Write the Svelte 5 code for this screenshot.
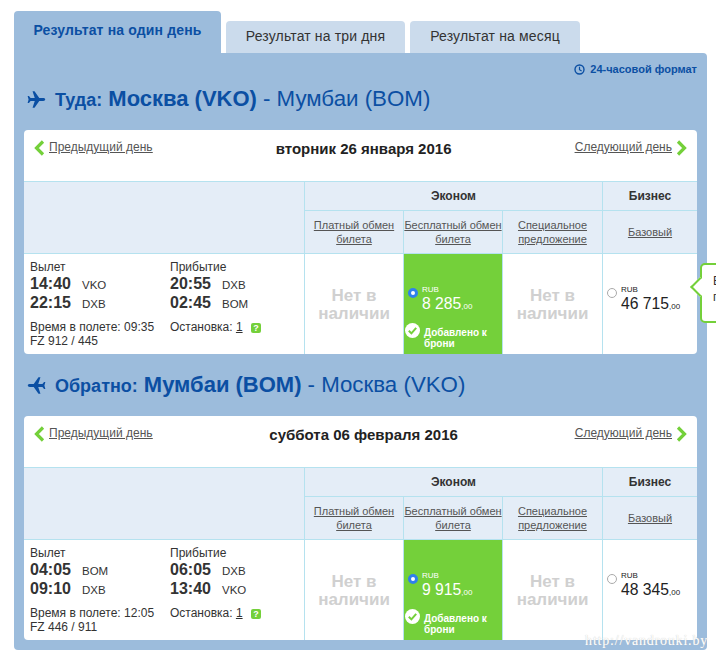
<script>
	const legs = [
		{
			label: 'Туда:',
			from: 'Москва (VKO)',
			to: 'Мумбаи (BOM)',
			back: false,
			date: 'вторник 26 января 2016',
			times: [['14:40', 'VKO', '20:55', 'DXB'], ['22:15', 'DXB', '02:45', 'BOM']],
			duration: '09:35',
			flight: 'FZ 912 / 445',
			eco: '8 285',
			biz: '46 715'
		},
		{
			label: 'Обратно:',
			from: 'Мумбаи (BOM)',
			to: 'Москва (VKO)',
			back: true,
			date: 'суббота 06 февраля 2016',
			times: [['04:05', 'BOM', '06:05', 'DXB'], ['09:10', 'DXB', '13:40', 'VKO']],
			duration: '12:05',
			flight: 'FZ 446 / 911',
			eco: '9 915',
			biz: '48 345'
		}
	];
</script>

<div class="page">
	<nav class="tabs">
		<div class="tab active">Результат на один день</div>
		<div class="tab">Результат на три дня</div>
		<div class="tab">Результат на месяц</div>
	</nav>

	<main class="panel">
		<div class="format">
			<svg width="11" height="11" viewBox="0 0 11 11">
				<circle cx="5.5" cy="5.5" r="4.5" fill="none" stroke="#0b4fa3" stroke-width="1.4" />
				<path d="M5.5 2.8V5.7L7.6 7" fill="none" stroke="#0b4fa3" stroke-width="1.2" />
			</svg>
			<span>24-часовой формат</span>
		</div>

		{#each legs as leg, i}
			<h2 class="route" class:second={i === 1}>
				<svg class="plane" class:back={leg.back} width="19" height="19" viewBox="0 0 24 24">
					<path
						fill="#0b4fa3"
						d="M23 12c0-1-1-1.800-2.500-1.800H15.500L9.500 1.500H7L9.800 10.200H4.500L2.500 7.500H.8L2 12 .8 16.500H2.500L4.500 13.800H9.800L7 22.500H9.500L15.500 13.800H20.500C22 13.800 23 13 23 12Z"
					/>
				</svg>
				<span class="label">{leg.label}</span>
				<strong>{leg.from}</strong>
				<span class="rest">- {leg.to}</span>
			</h2>

			<section class="card">
				<div class="days">
					<a class="day prev" href="#prev">
						<svg width="11" height="16" viewBox="0 0 11 16"><path d="M9 1.500 2.500 8 9 14.500" fill="none" stroke="#74d03a" stroke-width="3.200" /></svg>
						<u>Предыдущий день</u>
					</a>
					<div class="date">{leg.date}</div>
					<a class="day next" href="#next">
						<u>Следующий день</u>
						<svg width="11" height="16" viewBox="0 0 11 16"><path d="M2 1.500 8.500 8 2 14.500" fill="none" stroke="#74d03a" stroke-width="3.200" /></svg>
					</a>
				</div>

				<div class="fares">
					<div class="blank"></div>
					<div class="head cabin eco-head">Эконом</div>
					<div class="head cabin biz-head">Бизнес</div>
					<div class="head sub"><u>Платный обмен билета</u></div>
					<div class="head sub"><u>Бесплатный обмен билета</u></div>
					<div class="head sub"><u>Специальное предложение</u></div>
					<div class="head sub last"><u>Базовый</u></div>

					<div class="info">
						<div class="col">
							<div>Вылет</div>
							<div class="times">
								{#each leg.times as t}
									<div class="time"><b>{t[0]}</b><span>{t[1]}</span></div>
								{/each}
							</div>
							<div class="meta">Время в полете: {leg.duration}</div>
							<div>{leg.flight}</div>
						</div>
						<div class="col">
							<div>Прибытие</div>
							<div class="times">
								{#each leg.times as t}
									<div class="time"><b>{t[2]}</b><span>{t[3]}</span></div>
								{/each}
							</div>
							<div class="meta">Остановка: <u>1</u> <i class="help">?</i></div>
						</div>
					</div>

					<div class="none">Нет в наличии</div>
					<div class="selected">
						<div class="price">
							<span class="radio on"></span>
							<div>
								<div class="cur">RUB</div>
								<div class="amount">{leg.eco}<small>,00</small></div>
							</div>
						</div>
						<div class="added">
							<svg width="15" height="15" viewBox="0 0 15 15">
								<circle cx="7.500" cy="7.500" r="7.500" fill="#fff" />
								<path d="M3.800 7.800 6.400 10.400 11.200 4.800" fill="none" stroke="#74d03a" stroke-width="2" />
							</svg>
							<span>Добавлено к брони</span>
						</div>
					</div>
					<div class="none">Нет в наличии</div>
					<div class="biz">
						<div class="price">
							<span class="radio"></span>
							<div>
								<div class="cur">RUB</div>
								<div class="amount">{leg.biz}<small>,00</small></div>
							</div>
						</div>
					</div>
				</div>
			</section>
		{/each}
	</main>

	<div class="tooltip">В<br />п</div>
	<div class="mark">http://vandrouki.by</div>
</div>

<style>
	:global(body) {
		margin: 0;
		background: #fff;
	}

	.page {
		position: relative;
		width: 716px;
		height: 656px;
		overflow: hidden;
		box-sizing: border-box;
		padding: 11px 9px 0 14px;
		font-family: 'Liberation Sans', Arial, sans-serif;
		font-size: 12px;
		color: #333;
	}

	u {
		text-decoration: underline;
	}

	.tabs {
		display: flex;
		gap: 5px;
		align-items: flex-end;
		height: 42px;
	}

	.tab {
		width: 179px;
		height: 32px;
		box-sizing: border-box;
		padding-top: 7px;
		background: #cbdbec;
		border-radius: 4px 4px 0 0;
		text-align: center;
		font-size: 14px;
		letter-spacing: 0.15px;
		color: #333;
	}

	.tab.active {
		width: 207px;
		height: 42px;
		padding-top: 11px;
		background: #9cbcdc;
		color: #0b4fa3;
		font-weight: bold;
	}

	.tab:last-child {
		width: 170px;
	}

	.panel {
		height: 597px;
		box-sizing: border-box;
		padding: 9px 10px 0;
		background: #9cbcdc;
		border-radius: 0 4px 4px 4px;
	}

	.format {
		display: flex;
		justify-content: flex-end;
		align-items: center;
		gap: 5px;
		height: 14px;
		color: #0b4fa3;
		font-size: 11px;
		font-weight: bold;
	}

	.route {
		display: flex;
		align-items: baseline;
		height: 30px;
		margin: 8px 0 0;
		padding-left: 3px;
		font-size: 22px;
		font-weight: normal;
		line-height: 30px;
		color: #0b4fa3;
	}

	.route.second {
		margin-top: 16px;
	}

	.plane {
		align-self: center;
		margin-right: 9px;
		flex: none;
	}

	.plane.back {
		transform: scaleX(-1);
	}

	.label {
		font-size: 18px;
		font-weight: bold;
		margin-right: 6px;
	}

	.route strong {
		margin-right: 6px;
	}

	.rest {
		font-size: 22.3px;
	}

	.card {
		margin-top: 16px;
		height: 224px;
		background: #fff;
		border-radius: 4px;
		overflow: hidden;
	}

	.days {
		display: flex;
		justify-content: space-between;
		height: 52px;
		box-sizing: border-box;
		padding: 8px 10px 0;
		position: relative;
	}

	.day {
		display: flex;
		align-items: flex-start;
		gap: 4px;
		height: 18px;
		color: #555;
		font-size: 12px;
		line-height: 18px;
	}

	.day svg {
		margin-top: 2px;
	}

	.date {
		flex: 1;
		padding-top: 2px;
		text-align: center;
		font-size: 15px;
		font-weight: bold;
		color: #222;
	}

	.fares {
		display: grid;
		grid-template-columns: 281px 99px 99px 100px 94px;
		grid-template-rows: 29px 43px 100px;
		border-top: 1px solid #b5e2ef;
		margin-top: -1px;
	}

	.blank {
		grid-row: 1 / 3;
		background: #e4edf7;
		border-right: 1px solid #b5e2ef;
		border-bottom: 1px solid #b5e2ef;
	}

	.head {
		background: #e4edf7;
		border-bottom: 1px solid #b5e2ef;
		border-right: 1px solid #b5e2ef;
		box-sizing: border-box;
		display: flex;
		align-items: center;
		justify-content: center;
		text-align: center;
	}

	.cabin {
		font-weight: bold;
		color: #333;
	}

	.eco-head {
		grid-column: 2 / 5;
	}

	.biz-head,
	.last {
		border-right: 0;
	}

	.sub {
		font-size: 11px;
		line-height: 14px;
		color: #555;
	}

	.info {
		display: flex;
		box-sizing: border-box;
		padding: 6px 0 0 6px;
		border-right: 1px solid #b5e2ef;
		line-height: 14px;
	}

	.col {
		flex: none;
		width: 140px;
		color: #333;
	}

	.times {
		margin-top: 1px;
	}

	.time {
		display: flex;
		align-items: baseline;
		height: 19px;
		line-height: 18px;
	}

	.time b {
		width: 52px;
		font-size: 16px;
		color: #333;
	}

	.time span {
		font-size: 11.500px;
	}

	.meta {
		margin-top: 7px;
	}

	.help {
		display: inline-block;
		width: 10px;
		height: 10px;
		margin-left: 5px;
		border-radius: 2px;
		background: #74d03a;
		color: #fff;
		font-size: 9px;
		font-style: normal;
		font-weight: bold;
		line-height: 10px;
		text-align: center;
	}

	.none {
		display: flex;
		align-items: center;
		justify-content: center;
		padding: 1px 10px 0;
		border-right: 1px solid #b5e2ef;
		font-size: 17px;
		font-weight: bold;
		line-height: 18px;
		text-align: center;
		color: #d0d0d0;
	}

	.selected {
		background: #74d03a;
		border-right: 1px solid #b5e2ef;
		color: #fff;
		padding: 31px 0 0 4px;
	}

	.biz {
		padding: 31px 0 0 4px;
		color: #222;
	}

	.price {
		display: flex;
		gap: 4px;
		align-items: flex-start;
	}

	.radio {
		flex: none;
		width: 8px;
		height: 8px;
		margin-top: 3px;
		border: 1px solid #aaa;
		border-radius: 50%;
		background: #fff;
	}

	.radio.on {
		box-sizing: border-box;
		width: 10px;
		height: 10px;
		border: 3px solid #2f80ed;
	}

	.cur {
		font-size: 8px;
		line-height: 10px;
	}

	.amount {
		font-size: 15.7px;
		line-height: 17px;
		white-space: nowrap;
	}

	.amount small {
		font-size: 8px;
	}

	.added {
		display: flex;
		gap: 4px;
		margin: 8px 0 0 -3px;
		align-items: flex-start;
		font-size: 10px;
		font-weight: bold;
		line-height: 11px;
	}

	.added svg {
		flex: none;
	}

	.added span {
		padding-top: 4px;
	}

	.tooltip {
		position: absolute;
		left: 700px;
		top: 263px;
		width: 40px;
		height: 60px;
		box-sizing: border-box;
		padding: 8px 0 0 11px;
		background: #fff;
		border: 2px solid #74d03a;
		border-radius: 5px;
		font-size: 12px;
		line-height: 16px;
	}

	.tooltip::before {
		content: '';
		position: absolute;
		left: -9px;
		top: 15px;
		width: 12px;
		height: 12px;
		background: #fff;
		border-left: 2px solid #74d03a;
		border-bottom: 2px solid #74d03a;
		transform: rotate(45deg);
	}

	.mark {
		position: absolute;
		right: 8px;
		top: 633px;
		font-family: 'Liberation Serif', serif;
		font-size: 14px;
		letter-spacing: 0.800px;
		color: #fff;
		text-shadow: 0 0 1px #bbb;
	}
</style>
